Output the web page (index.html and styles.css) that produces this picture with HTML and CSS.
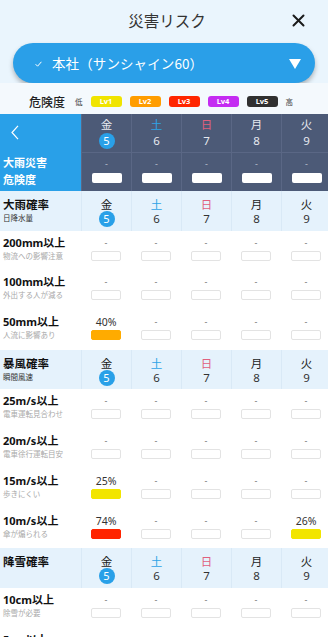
FILE: index.html
```html
<!DOCTYPE html>
<html lang="ja">
<head>
<meta charset="utf-8">
<link rel="stylesheet" href="styles.css">
</head>
<body>
<div class="page">
  <div class="top">
    <header class="titlebar">
      <span></span>
      <h1>災害リスク</h1>
      <span class="close"><svg width="13" height="13" viewBox="0 0 13 13"><path d="M1.5 1.5 L11.5 11.5 M11.5 1.5 L1.5 11.5" stroke="#1a1a1a" stroke-width="2" stroke-linecap="round"/></svg></span>
    </header>
    <div class="selector">
      <svg class="check" width="7" height="6" viewBox="0 0 7 6"><path d="M0.6 3.2 L2.6 5.2 L6.4 0.8" fill="none" stroke="#fff" stroke-width="1"/></svg>
      <span class="place">本社（サンシャイン60）</span>
      <svg class="tri" width="12" height="10" viewBox="0 0 12 10"><polygon points="0,0 12,0 6,10" fill="#fff"/></svg>
    </div>
    <div class="legend">
      <span class="legend-title">危険度</span>
      <span class="lo">低</span>
      <span class="badge lv1">Lv1</span>
      <span class="badge lv2">Lv2</span>
      <span class="badge lv3">Lv3</span>
      <span class="badge lv4">Lv4</span>
      <span class="badge lv5">Lv5</span>
      <span class="hi">高</span>
    </div>
  </div>

  <div class="darkhead">
    <div class="corner">
      <svg class="chev" width="8" height="15" viewBox="0 0 8 15"><path d="M7 0.8 L1 7.5 L7 14.2" fill="none" stroke="#fff" stroke-width="1.2"/></svg>
      <div class="corner-title">大雨災害<br>危険度</div>
    </div>
    <div class="dh-day"><span class="dn">金</span><span class="num today">5</span></div>
    <div class="dh-day"><span class="dn sat">土</span><span class="num">6</span></div>
    <div class="dh-day"><span class="dn sun">日</span><span class="num">7</span></div>
    <div class="dh-day"><span class="dn">月</span><span class="num">8</span></div>
    <div class="dh-day"><span class="dn">火</span><span class="num">9</span></div>
    <div class="dh-val"><span class="v">-</span><span class="box white"></span></div>
    <div class="dh-val"><span class="v">-</span><span class="box white"></span></div>
    <div class="dh-val"><span class="v">-</span><span class="box white"></span></div>
    <div class="dh-val"><span class="v">-</span><span class="box white"></span></div>
    <div class="dh-val"><span class="v">-</span><span class="box white"></span></div>
  </div>

  <!-- 大雨確率 -->
  <div class="row sec">
    <div class="label"><span class="sec-title">大雨確率</span><span class="sec-sub">日降水量</span></div>
    <div class="day"><span class="dn">金</span><span class="num today">5</span></div>
    <div class="day"><span class="dn sat">土</span><span class="num">6</span></div>
    <div class="day"><span class="dn sun">日</span><span class="num">7</span></div>
    <div class="day"><span class="dn">月</span><span class="num">8</span></div>
    <div class="day"><span class="dn">火</span><span class="num">9</span></div>
  </div>
  <div class="row data">
    <div class="label"><span class="name">200mm以上</span><span class="sub">物流への影響注意</span></div>
    <div class="cell"><span class="v dash">-</span><span class="box"></span></div>
    <div class="cell"><span class="v dash">-</span><span class="box"></span></div>
    <div class="cell"><span class="v dash">-</span><span class="box"></span></div>
    <div class="cell"><span class="v dash">-</span><span class="box"></span></div>
    <div class="cell"><span class="v dash">-</span><span class="box"></span></div>
  </div>
  <div class="row data">
    <div class="label"><span class="name">100mm以上</span><span class="sub">外出する人が減る</span></div>
    <div class="cell"><span class="v dash">-</span><span class="box"></span></div>
    <div class="cell"><span class="v dash">-</span><span class="box"></span></div>
    <div class="cell"><span class="v dash">-</span><span class="box"></span></div>
    <div class="cell"><span class="v dash">-</span><span class="box"></span></div>
    <div class="cell"><span class="v dash">-</span><span class="box"></span></div>
  </div>
  <div class="row data">
    <div class="label"><span class="name">50mm以上</span><span class="sub">人流に影響あり</span></div>
    <div class="cell"><span class="v">40%</span><span class="box orange"></span></div>
    <div class="cell"><span class="v dash">-</span><span class="box"></span></div>
    <div class="cell"><span class="v dash">-</span><span class="box"></span></div>
    <div class="cell"><span class="v dash">-</span><span class="box"></span></div>
    <div class="cell"><span class="v dash">-</span><span class="box"></span></div>
  </div>

  <!-- 暴風確率 -->
  <div class="row sec">
    <div class="label"><span class="sec-title">暴風確率</span><span class="sec-sub">瞬間風速</span></div>
    <div class="day"><span class="dn">金</span><span class="num today">5</span></div>
    <div class="day"><span class="dn sat">土</span><span class="num">6</span></div>
    <div class="day"><span class="dn sun">日</span><span class="num">7</span></div>
    <div class="day"><span class="dn">月</span><span class="num">8</span></div>
    <div class="day"><span class="dn">火</span><span class="num">9</span></div>
  </div>
  <div class="row data">
    <div class="label"><span class="name">25m/s以上</span><span class="sub">電車運転見合わせ</span></div>
    <div class="cell"><span class="v dash">-</span><span class="box"></span></div>
    <div class="cell"><span class="v dash">-</span><span class="box"></span></div>
    <div class="cell"><span class="v dash">-</span><span class="box"></span></div>
    <div class="cell"><span class="v dash">-</span><span class="box"></span></div>
    <div class="cell"><span class="v dash">-</span><span class="box"></span></div>
  </div>
  <div class="row data">
    <div class="label"><span class="name">20m/s以上</span><span class="sub">電車徐行運転目安</span></div>
    <div class="cell"><span class="v dash">-</span><span class="box"></span></div>
    <div class="cell"><span class="v dash">-</span><span class="box"></span></div>
    <div class="cell"><span class="v dash">-</span><span class="box"></span></div>
    <div class="cell"><span class="v dash">-</span><span class="box"></span></div>
    <div class="cell"><span class="v dash">-</span><span class="box"></span></div>
  </div>
  <div class="row data">
    <div class="label"><span class="name">15m/s以上</span><span class="sub">歩きにくい</span></div>
    <div class="cell"><span class="v">25%</span><span class="box yellow"></span></div>
    <div class="cell"><span class="v dash">-</span><span class="box"></span></div>
    <div class="cell"><span class="v dash">-</span><span class="box"></span></div>
    <div class="cell"><span class="v dash">-</span><span class="box"></span></div>
    <div class="cell"><span class="v dash">-</span><span class="box"></span></div>
  </div>
  <div class="row data">
    <div class="label"><span class="name">10m/s以上</span><span class="sub">傘が煽られる</span></div>
    <div class="cell"><span class="v">74%</span><span class="box red"></span></div>
    <div class="cell"><span class="v dash">-</span><span class="box"></span></div>
    <div class="cell"><span class="v dash">-</span><span class="box"></span></div>
    <div class="cell"><span class="v dash">-</span><span class="box"></span></div>
    <div class="cell"><span class="v">26%</span><span class="box yellow"></span></div>
  </div>

  <!-- 降雪確率 -->
  <div class="row sec">
    <div class="label"><span class="sec-title">降雪確率</span></div>
    <div class="day"><span class="dn">金</span><span class="num today">5</span></div>
    <div class="day"><span class="dn sat">土</span><span class="num">6</span></div>
    <div class="day"><span class="dn sun">日</span><span class="num">7</span></div>
    <div class="day"><span class="dn">月</span><span class="num">8</span></div>
    <div class="day"><span class="dn">火</span><span class="num">9</span></div>
  </div>
  <div class="row data">
    <div class="label"><span class="name">10cm以上</span><span class="sub">除雪が必要</span></div>
    <div class="cell"><span class="v dash">-</span><span class="box"></span></div>
    <div class="cell"><span class="v dash">-</span><span class="box"></span></div>
    <div class="cell"><span class="v dash">-</span><span class="box"></span></div>
    <div class="cell"><span class="v dash">-</span><span class="box"></span></div>
    <div class="cell"><span class="v dash">-</span><span class="box"></span></div>
  </div>
  <div class="row data">
    <div class="label"><span class="name">5cm以上</span><span class="sub">歩行に注意</span></div>
    <div class="cell"><span class="v dash">-</span><span class="box"></span></div>
    <div class="cell"><span class="v dash">-</span><span class="box"></span></div>
    <div class="cell"><span class="v dash">-</span><span class="box"></span></div>
    <div class="cell"><span class="v dash">-</span><span class="box"></span></div>
    <div class="cell"><span class="v dash">-</span><span class="box"></span></div>
  </div>
</div>
</body>
</html>
```

FILE: styles.css
```css
* { box-sizing: border-box; }
html, body { margin: 0; padding: 0; }
body {
  width: 328px;
  height: 637px;
  overflow: hidden;
  background: #fff;
  font-family: "Noto Sans", "Noto Sans CJK JP", sans-serif;
  color: #222;
}
.page { width: 331px; }

.top { background: #eaf5fd; }
.titlebar {
  height: 43px;
  display: grid;
  grid-template-columns: 40px 1fr 40px;
  align-items: center;
  padding-bottom: 3px;
}
.titlebar h1 {
  margin: 0;
  text-align: center;
  font-size: 15.5px;
  font-weight: 400;
  color: #333;
  font-family: "Noto Sans CJK JP", sans-serif;
  padding-left: 3px;
}
.close { display: flex; justify-content: flex-start; padding-left: 1px; }
.close svg { display: block; }

.selector {
  margin: 0 16px 0 13px;
  height: 40px;
  border-radius: 20px;
  background: #2a9fe8;
  box-shadow: 0 3px 5px rgba(0,0,0,0.28);
  display: flex;
  align-items: center;
  padding: 0 14px 0 22px;
  color: #fff;
}
.check { display: block; margin-right: 10px; margin-top: 1px; }
.place {
  font-family: "Noto Sans CJK JP", sans-serif;
  font-size: 13.5px;
  flex: 1;
  letter-spacing: 0.1px;
}
.tri { display: block; margin-top: 1px; }

.legend {
  height: 31px;
  display: flex;
  align-items: center;
  padding: 6px 0 0 29px;
  background: #f4f9fd;
}
.legend-title {
  font-family: "Noto Sans CJK JP", sans-serif;
  font-size: 12px;
  font-weight: 500;
  color: #222;
  margin-right: 10px;
}
.lo, .hi {
  font-family: "Noto Sans CJK JP", sans-serif;
  font-size: 7.5px;
  color: #444;
}
.lo { margin-right: 8px; }
.hi { margin-left: 8px; }
.badge {
  width: 31px;
  height: 11px;
  border-radius: 3px;
  color: #fff;
  font-size: 7.5px;
  font-weight: 700;
  line-height: 11px;
  text-align: center;
  margin-right: 8px;
}
.badge.lv5 { margin-right: 0; }
.lv1 { background: #f0e400; }
.lv2 { background: #ff9d00; }
.lv3 { background: #ff2600; }
.lv4 { background: #c42cf2; }
.lv5 { background: #303030; }

/* dark header */
.darkhead {
  display: grid;
  grid-template-columns: 81px repeat(5, 50px);
  grid-template-rows: 38.5px 38.5px;
  background: #4c5a77;
}
.corner {
  grid-row: 1 / span 2;
  background: #29a0e8;
  display: flex;
  flex-direction: column;
  padding: 11px 0 3px 3px;
}
.chev { display: block; margin-left: 8px; }
.corner-title {
  margin-top: auto;
  color: #fff;
  font-family: "Noto Sans CJK JP", sans-serif;
  font-weight: 700;
  font-size: 11px;
  line-height: 17px;
}
.dh-day, .dh-val {
  display: flex;
  flex-direction: column;
  align-items: center;
  border-left: 1px solid #5a6785;
}
.dh-day {
  padding-top: 3px;
  border-bottom: 1px solid #5a6785;
}
.dh-day .dn { color: #e6e9ef; }
.dh-day .dn.sat { color: #2fa3e6; }
.dh-day .dn.sun { color: #e0607e; }
.dh-day .num { color: #e6e9ef; margin-top: 2px; }
.dh-day .num.today { color: #fff; }
.dh-val { padding-top: 5px; }
.dh-val .v { color: #b8bfcc; font-size: 9px; line-height: 12px; }
.dh-val .box { margin-top: 3px; }

.dn {
  font-family: "Noto Sans CJK JP", sans-serif;
  font-size: 11.5px;
  line-height: 14px;
  color: #222;
}
.dn.sat { color: #2fa3e6; }
.dn.sun { color: #e0607e; }
.num {
  width: 16px;
  height: 16px;
  font-size: 11.5px;
  line-height: 16px;
  text-align: center;
  color: #333;
}
.num.today {
  border-radius: 50%;
  background: #29a0e8;
  color: #fff;
  font-size: 11px;
}

/* rows */
.row {
  display: grid;
  grid-template-columns: 81px repeat(5, 50px);
  height: 39.7px;
}
.row.sec { background: #e5f2fc; }
.row.sec .day { border-left: 1px solid #d9e9f6; }
.day {
  display: flex;
  flex-direction: column;
  align-items: center;
  padding-top: 6px;
}
.label {
  display: flex;
  flex-direction: column;
  padding: 5px 0 0 3px;
}
.sec-title {
  font-family: "Noto Sans CJK JP", sans-serif;
  font-weight: 700;
  font-size: 11.5px;
  line-height: 16px;
  color: #111;
}
.sec-sub {
  font-family: "Noto Sans CJK JP", sans-serif;
  font-size: 7.5px;
  line-height: 11px;
  color: #333;
}
.name {
  font-weight: 700;
  font-size: 11px;
  line-height: 14px;
  color: #111;
  font-family: "Noto Sans", "Noto Sans CJK JP", sans-serif;
}
.sub {
  font-family: "Noto Sans CJK JP", sans-serif;
  font-size: 7.5px;
  line-height: 12px;
  color: #a8a8a8;
}
.cell {
  display: flex;
  flex-direction: column;
  align-items: center;
  padding-top: 6px;
}
.v {
  font-size: 10.5px;
  line-height: 12px;
  color: #333;
}
.v.dash { color: #777; font-size: 9px; }
.box {
  display: block;
  width: 30px;
  height: 10px;
  border-radius: 2px;
  border: 1px solid #e3e3e3;
  background: #fff;
  margin-top: 2px;
}
.box.white { border: none; }
.box.orange { background: #ffab00; border-color: #ffab00; }
.box.yellow { background: #f2e500; border-color: #f2e500; }
.box.red { background: #ff2400; border-color: #ff2400; }
```
